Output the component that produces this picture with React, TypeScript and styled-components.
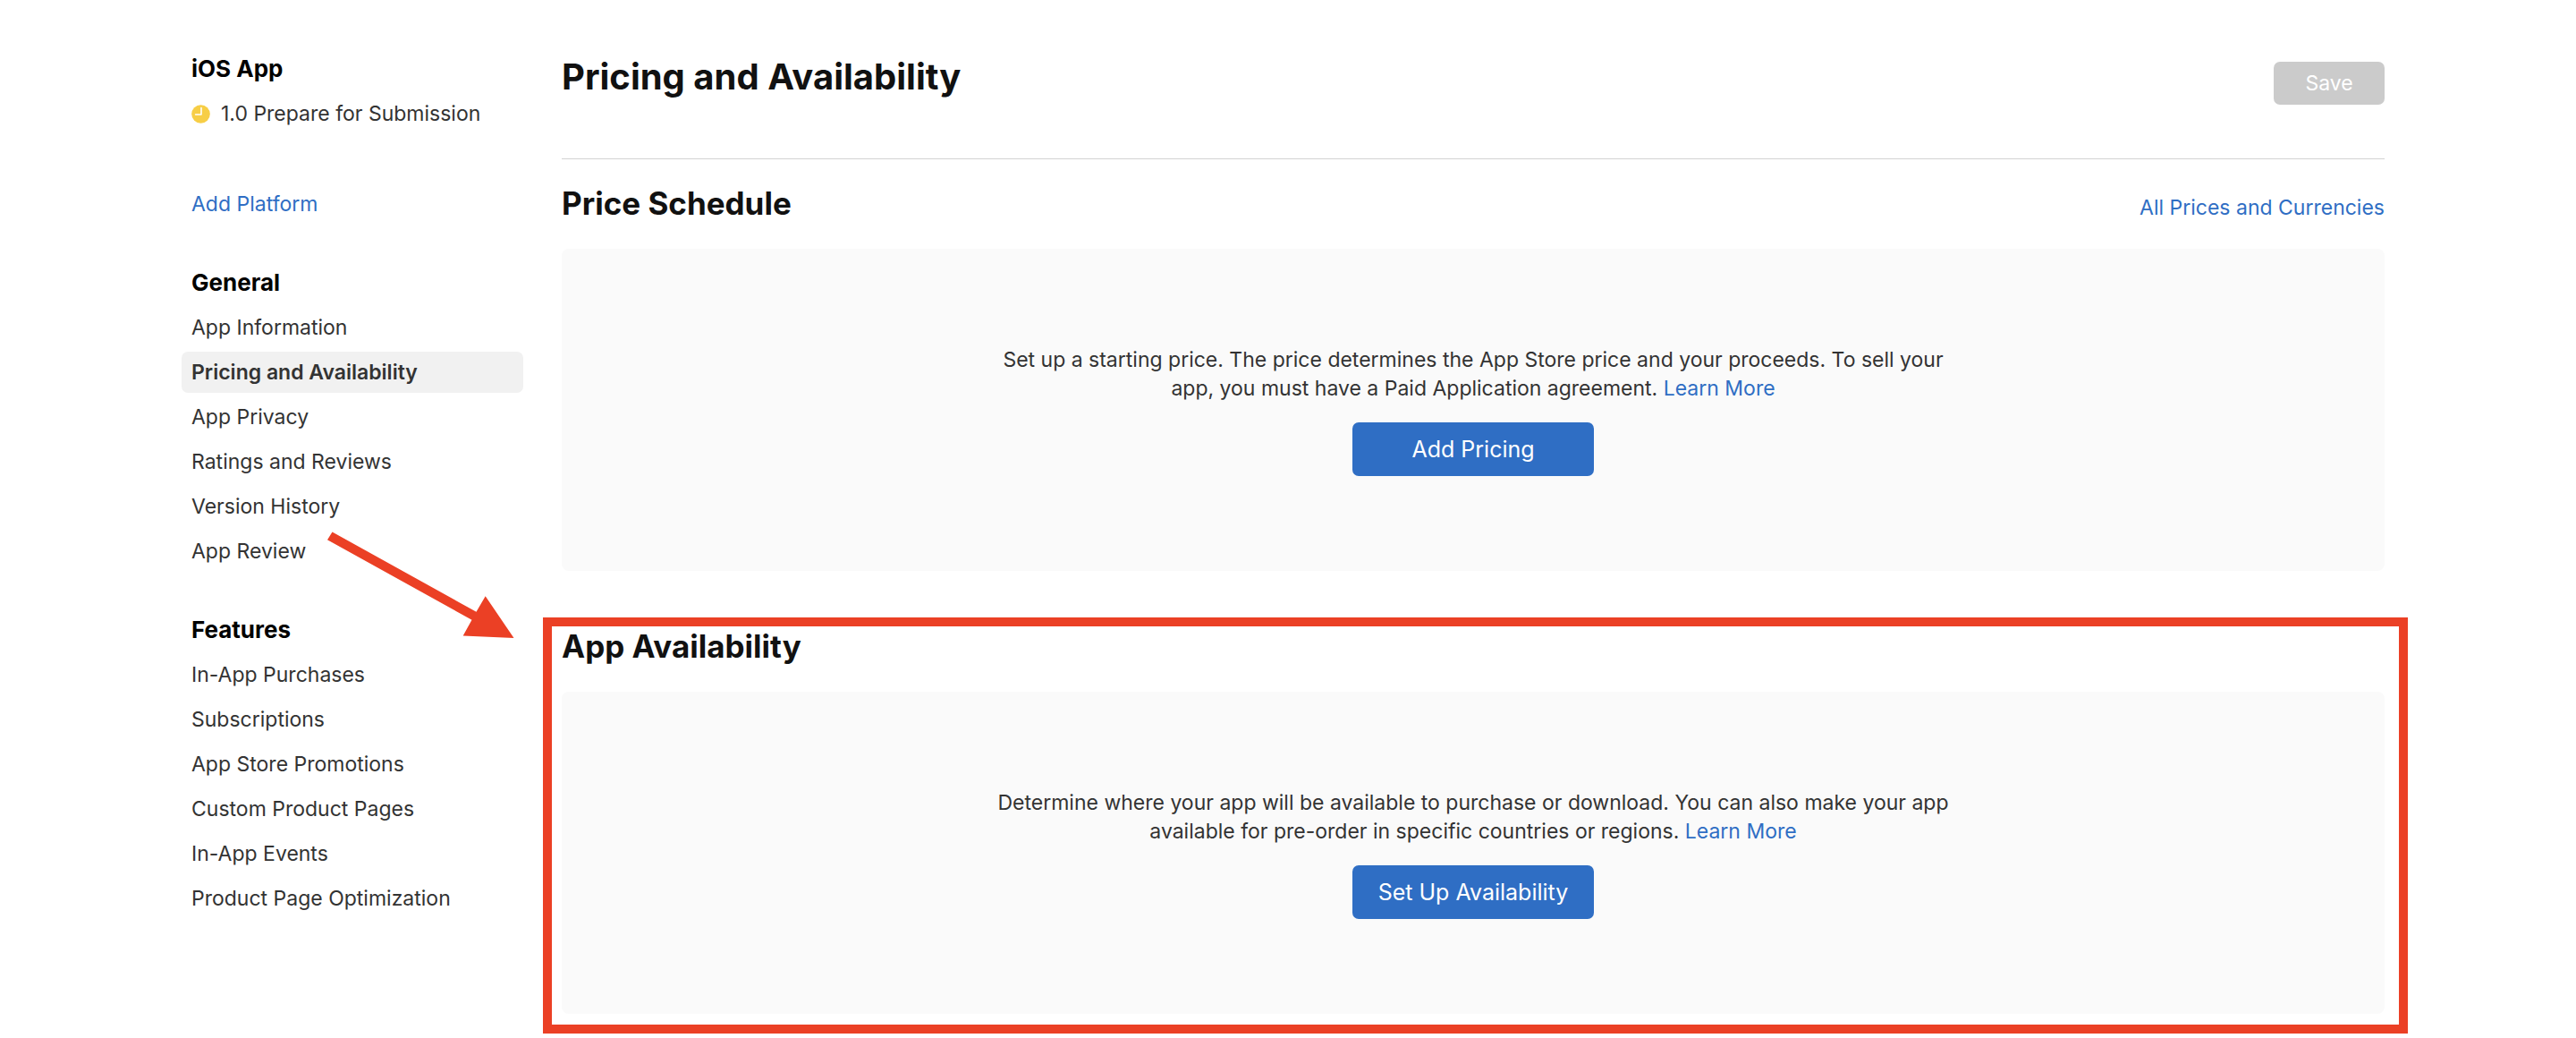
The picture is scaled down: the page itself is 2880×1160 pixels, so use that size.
import React from "react";
import styled, { createGlobalStyle, css } from "styled-components";

const color = {
  text: "#333333",
  heading: "#111111",
  link: "#2f6ec4",
  panel: "#fafafa",
  selected: "#f1f1f1",
  rule: "#d2d2d2",
  disabled: "#cbcbcb",
  callout: "#eb4025",
};

const GlobalStyle = createGlobalStyle`
  *, *::before, *::after { box-sizing: border-box; }
  body {
    margin: 0;
    background: #ffffff;
    color: ${color.text};
    font-family: Inter, "Liberation Sans", sans-serif;
    font-size: 23px;
    line-height: 32px;
  }
  h1, h2, h3, p, ul { margin: 0; padding: 0; }
`;

const Page = styled.div`
  display: grid;
  grid-template-columns: 360px minmax(0, 1fr);
  column-gap: 54px;
  padding: 0 214px 27px;
`;

const Sidebar = styled.nav`
  display: flex;
  flex-direction: column;
  padding-top: 54px;
`;

const Group = styled.section<{ $gap?: number }>`
  margin-top: ${(p) => p.$gap ?? 0}px;
`;

const GroupTitle = styled.h3`
  padding-bottom: 4px;
  color: #000000;
  font-size: 26px;
  font-weight: 700;
  line-height: 46px;
`;

const List = styled.ul`
  display: grid;
  row-gap: 4px;
  list-style: none;
`;

const NavLink = styled.a<{ $selected?: boolean; $accent?: boolean }>`
  display: flex;
  align-items: center;
  gap: 12px;
  margin: 0 -11px;
  padding: 0 11px;
  border-radius: 7px;
  color: ${(p) => (p.$accent ? color.link : color.text)};
  line-height: 46px;
  text-decoration: none;
  white-space: nowrap;
  ${(p) =>
    p.$selected &&
    css`
      background: ${color.selected};
      font-weight: 600;
    `}
`;

const Main = styled.main`
  padding-top: 62px;
`;

const Header = styled.header`
  display: flex;
  justify-content: space-between;
  align-items: flex-start;
  height: 116px;
  border-bottom: 1px solid ${color.rule};
`;

const Title = styled.h1`
  color: ${color.heading};
  font-size: 40px;
  font-weight: 700;
  line-height: 48px;
`;

const SaveButton = styled.button`
  width: 124px;
  height: 48px;
  margin-top: 7px;
  border: 0;
  border-radius: 7px;
  background: ${color.disabled};
  color: #ffffff;
  font: inherit;
`;

const Section = styled.section<{ $gap: number }>`
  position: relative;
  margin-top: ${(p) => p.$gap}px;
`;

const SectionHead = styled.div`
  display: flex;
  justify-content: space-between;
  align-items: baseline;
  height: 40px;
  margin-bottom: 31px;
`;

const SectionTitle = styled.h2`
  color: ${color.heading};
  font-size: 35px;
  font-weight: 700;
  line-height: 40px;
`;

const Link = styled.a`
  color: ${color.link};
  text-decoration: none;
`;

const Panel = styled.div`
  display: flex;
  flex-direction: column;
  align-items: center;
  gap: 22px;
  padding: 108px 32px 106px;
  border-radius: 8px;
  background: ${color.panel};
`;

const Message = styled.p`
  max-width: 1080px;
  text-align: center;
`;

const PrimaryButton = styled.button`
  width: 270px;
  height: 60px;
  border: 0;
  border-radius: 7px;
  background: ${color.link};
  color: #ffffff;
  font-family: inherit;
  font-size: 25px;
  line-height: 32px;
  white-space: nowrap;
  cursor: pointer;
`;

const CalloutFrame = styled.div`
  position: absolute;
  inset: -12px -26px -22px -21px;
  border: 10px solid ${color.callout};
  pointer-events: none;
`;

const CalloutArrow = styled.svg`
  position: absolute;
  top: -108px;
  left: -262px;
  fill: ${color.callout};
  pointer-events: none;
`;

const ClockIcon = () => (
  <svg width="21" height="21" viewBox="0 0 21 21" aria-hidden="true">
    <circle cx="10.5" cy="10.5" r="10.3" fill="#f7ce46" />
    <path d="M11 3.6V11H4.6" fill="none" stroke="#ffffff" strokeWidth="1.6" strokeLinecap="round" strokeLinejoin="round" />
  </svg>
);

const general = [
  "App Information",
  "Pricing and Availability",
  "App Privacy",
  "Ratings and Reviews",
  "Version History",
  "App Review",
];

const features = [
  "In-App Purchases",
  "Subscriptions",
  "App Store Promotions",
  "Custom Product Pages",
  "In-App Events",
  "Product Page Optimization",
];

const NavList = ({ items, selected }: { items: string[]; selected?: string }) => (
  <List>
    {items.map((item) => (
      <li key={item}>
        <NavLink href="#" $selected={item === selected} aria-current={item === selected ? "page" : undefined}>
          {item}
        </NavLink>
      </li>
    ))}
  </List>
);

export default function App() {
  return (
    <>
      <GlobalStyle />
      <Page>
        <Sidebar aria-label="App">
          <Group>
            <GroupTitle>iOS App</GroupTitle>
            <NavLink href="#">
              <ClockIcon />
              1.0 Prepare for Submission
            </NavLink>
          </Group>
          <Group $gap={55}>
            <NavLink href="#" $accent>
              Add Platform
            </NavLink>
          </Group>
          <Group $gap={42}>
            <GroupTitle>General</GroupTitle>
            <NavList items={general} selected="Pricing and Availability" />
          </Group>
          <Group $gap={42}>
            <GroupTitle>Features</GroupTitle>
            <NavList items={features} />
          </Group>
        </Sidebar>
        <Main>
          <Header>
            <Title>Pricing and Availability</Title>
            <SaveButton type="button" disabled>
              Save
            </SaveButton>
          </Header>
          <Section $gap={29}>
            <SectionHead>
              <SectionTitle>Price Schedule</SectionTitle>
              <Link href="#">All Prices and Currencies</Link>
            </SectionHead>
            <Panel>
              <Message>
                Set up a starting price. The price determines the App Store price and your proceeds. To sell your
                app, you must have a Paid Application agreement. <Link href="#">Learn More</Link>
              </Message>
              <PrimaryButton type="button">Add Pricing</PrimaryButton>
            </Panel>
          </Section>
          <Section $gap={64}>
            <SectionHead>
              <SectionTitle>App Availability</SectionTitle>
            </SectionHead>
            <Panel>
              <Message>
                Determine where your app will be available to purchase or download. You can also make your app
                available for pre-order in specific countries or regions. <Link href="#">Learn More</Link>
              </Message>
              <PrimaryButton type="button">Set Up Availability</PrimaryButton>
            </Panel>
            <CalloutFrame />
            <CalloutArrow width="209" height="120" viewBox="0 0 209 120" aria-hidden="true">
              <path d="M5.5 0.5L166.5 89.8L176.7 72.3L208.5 119L151.7 116.5L161.5 98.7L0 9.3Z" />
            </CalloutArrow>
          </Section>
        </Main>
      </Page>
    </>
  );
}
